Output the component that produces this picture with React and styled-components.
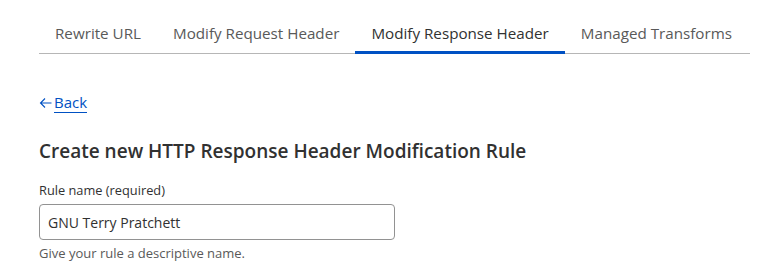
import React from 'react'
import styled, { createGlobalStyle } from 'styled-components'

const GlobalStyle = createGlobalStyle`
    body {
        margin: 0;
        background: #ffffff;
        font-family: 'Open Sans', 'Noto Sans', sans-serif;
    }
`

const Page = styled.div`
    padding: 13px 27px 0 39px;
`

const TabBar = styled.div`
    display: flex;
    width: 711px;
    border-bottom: 1px solid #b6b6b6;
`

const Tab = styled.div`
    padding: 9px 16px 10px;
    font-size: 15.2px;
    line-height: 22px;
    color: ${(props) => (props.active ? '#313131' : '#595959')};
    box-shadow: ${(props) => (props.active ? 'inset 0 -3px 0 #0051c3' : 'none')};
    margin-bottom: -1px;
    white-space: nowrap;
`

const BackLink = styled.a`
    display: inline-flex;
    align-items: center;
    gap: 2px;
    margin-top: 39px;
    color: #0051c3;
    font-size: 15px;
    line-height: 20px;
    text-decoration: none;
    cursor: pointer;
`

const BackText = styled.span`
    border-bottom: 1px solid #0051c3;
    line-height: 19px;
`

const Heading = styled.h2`
    margin: 24px 0 0;
    font-size: 19px;
    font-weight: 600;
    line-height: 26px;
    color: #313131;
`

const Field = styled.div`
    display: flex;
    flex-direction: column;
    margin-top: 17px;
    width: 356px;
`

const Label = styled.label`
    font-size: 12.8px;
    line-height: 18px;
    color: #313131;
`

const Input = styled.input`
    margin-top: 5px;
    height: 36px;
    box-sizing: border-box;
    border: 1px solid #929292;
    border-radius: 4px;
    padding: 0 8px;
    font-family: inherit;
    font-size: 14px;
    color: #313131;
    outline: none;
`

const Help = styled.div`
    margin-top: 4px;
    font-size: 13px;
    line-height: 18px;
    color: #595959;
`

const tabs = ['Rewrite URL', 'Modify Request Header', 'Modify Response Header', 'Managed Transforms']

export default function App() {
    return (
        <Page>
            <GlobalStyle />
            <TabBar>
                {tabs.map((t) => (
                    <Tab key={t} active={t === 'Modify Response Header'}>
                        {t}
                    </Tab>
                ))}
            </TabBar>
            <BackLink>
                <svg width="13" height="12" viewBox="0 0 13 12" fill="none">
                    <path d="M12.5 6H1.5M6 1.5L1.5 6 6 10.5" stroke="#0051c3" strokeWidth="1.1" />
                </svg>
                <BackText>Back</BackText>
            </BackLink>
            <Heading>Create new HTTP Response Header Modification Rule</Heading>
            <Field>
                <Label>Rule name (required)</Label>
                <Input defaultValue="GNU Terry Pratchett" />
                <Help>Give your rule a descriptive name.</Help>
            </Field>
        </Page>
    )
}
